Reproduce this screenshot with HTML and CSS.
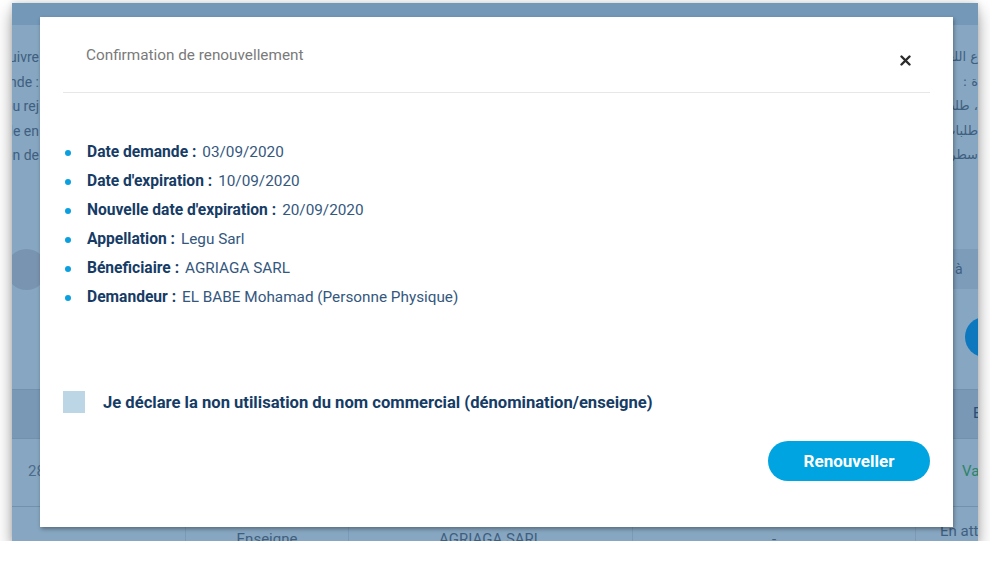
FILE: index.html
```html
<!DOCTYPE html>
<html lang="fr">
<head>
<meta charset="utf-8">
<title>Confirmation de renouvellement</title>
<link rel="stylesheet" href="styles.css">
</head>
<body>
<div class="window">
  <div class="page">
    <div class="page-top"></div>
    <div class="page-intro">
      <div class="intro-left">
        <div class="line"><span>Vous pouvez suivre</span></div>
        <div class="line"><span>Statut de la demande :</span></div>
        <div class="line"><span>Acceptation ou rej</span></div>
        <div class="line"><span>Demande en</span></div>
        <div class="line"><span>Validation de</span></div>
      </div>
      <div class="intro-right" dir="rtl">
        <div class="line">ع اللغة</div>
        <div class="line">ة :</div>
        <div class="line">، طلب</div>
        <div class="line">طلبات</div>
        <div class="line">سطر</div>
      </div>
    </div>
    <div class="page-band">
      <div class="band-circle"></div>
      <div class="band-right">à</div>
    </div>
    <div class="page-actions">
      <div class="action-circle"></div>
    </div>
    <div class="page-table">
      <div class="trow thead">
        <div class="cell"></div><div class="cell"></div><div class="cell"></div><div class="cell"></div>
        <div class="cell last">Etat</div>
      </div>
      <div class="trow tbody">
        <div class="cell first">28/08/2020</div><div class="cell"></div><div class="cell"></div><div class="cell"></div>
        <div class="cell last ok">Valide</div>
      </div>
      <div class="trow tlast">
        <div class="cell"></div>
        <div class="cell center">Enseigne</div>
        <div class="cell center">AGRIAGA SARL</div>
        <div class="cell center">-</div>
        <div class="cell wait">En attente</div>
      </div>
    </div>
  </div>

  <div class="modal" role="dialog" aria-labelledby="modal-title">
    <div class="modal-header">
      <h2 id="modal-title" class="modal-title">Confirmation de renouvellement</h2>
      <button class="modal-close" aria-label="Fermer">
        <svg width="11" height="11" viewBox="0 0 11 11"><path d="M1.5 1.5 L9.5 9.5 M9.5 1.5 L1.5 9.5" stroke="#2b2b2b" stroke-width="2.4" stroke-linecap="round"/></svg>
      </button>
    </div>
    <div class="modal-body">
      <ul class="details">
        <li><b>Date demande :</b> <span>03/09/2020</span></li>
        <li><b>Date d'expiration :</b> <span>10/09/2020</span></li>
        <li><b>Nouvelle date d'expiration :</b> <span>20/09/2020</span></li>
        <li><b>Appellation :</b> <span>Legu Sarl</span></li>
        <li><b>Béneficiaire :</b> <span>AGRIAGA SARL</span></li>
        <li><b>Demandeur :</b> <span>EL BABE Mohamad (Personne Physique)</span></li>
      </ul>
      <label class="declare">
        <span class="check"></span>
        <span class="declare-text">Je déclare la non utilisation du nom commercial (dénomination/enseigne)</span>
      </label>
      <div class="actions">
        <button class="btn-primary">Renouveller</button>
      </div>
    </div>
  </div>
</div>
</body>
</html>
```

FILE: styles.css
```css
* { box-sizing: border-box; }

html, body {
  margin: 0;
  padding: 0;
  background: #ffffff;
}

body {
  padding: 3px 0 0 12px;
  font-family: Roboto, "Liberation Sans", sans-serif;
}

.window {
  position: relative;
  width: 966px;
  height: 538px;
  overflow: hidden;
  background: #87a6c1;
  box-shadow: 0 8px 16px rgba(0, 0, 0, 0.36), 0 0 6px rgba(0, 0, 0, 0.14);
}

/* ---------- dimmed page behind the dialog ---------- */
.page {
  display: flex;
  flex-direction: column;
  height: 100%;
  color: #3f5f80;
  font-size: 14px;
}

.page-top {
  height: 22px;
  background: #7398b8;
  flex: none;
}

.page-intro {
  height: 224px;
  flex: none;
  display: flex;
  justify-content: space-between;
  padding-top: 20px;
}

.intro-left {
  width: 27px;
  overflow: hidden;
}

.intro-right {
  width: 25px;
  overflow: hidden;
  font-family: "DejaVu Sans", sans-serif;
  font-size: 13px;
}

.line {
  height: 24.5px;
  line-height: 24.5px;
  display: flex;
  white-space: nowrap;
}

.intro-left .line {
  justify-content: flex-end;
}

.intro-left .line span { flex: none; }

.page-band {
  height: 40px;
  flex: none;
  display: flex;
  justify-content: space-between;
}

.band-circle {
  width: 41px;
  height: 41px;
  border-radius: 50%;
  background: #7994b0;
  margin-left: -6px;
}

.band-right {
  width: 40px;
  background: #7c9cba;
  padding-left: 17px;
  line-height: 40px;
  color: #3f5f80;
}

.page-actions {
  height: 100px;
  flex: none;
  display: flex;
  justify-content: flex-end;
  padding-top: 28px;
}

.action-circle {
  width: 40px;
  height: 40px;
  border-radius: 50%;
  background: #0d78bd;
  margin-right: -27px;
}

.page-table {
  flex: 1;
  display: flex;
  flex-direction: column;
}

.trow {
  display: grid;
  grid-template-columns: 174px 163px 284px 283px 1fr;
  border-top: 1px solid #7390ad;
  flex: none;
}

.thead {
  height: 49px;
  background: #7898b6;
}

.tbody { height: 68px; }

.tlast { flex: 1; }

.cell {
  border-right: 1px solid #7c9ab6;
  white-space: nowrap;
  overflow: hidden;
}

.cell:last-child { border-right: 0; }

.thead .last {
  color: #2b4c73;
  padding-left: 57px;
  line-height: 47px;
  font-size: 15px;
}

.tbody .first {
  padding-left: 16px;
  line-height: 64px;
  font-size: 15px;
  color: #4c6b8b;
}

.tbody .last {
  padding-left: 46px;
  line-height: 64px;
  font-size: 15px;
}

.ok { color: #2d8469; }

.center {
  text-align: center;
  padding-top: 23px;
  font-size: 15px;
  color: #3f5f80;
}

.wait {
  padding-left: 24px;
  padding-top: 15px;
  font-size: 15px;
  color: #3f5f80;
}

/* ---------- dialog ---------- */
.modal {
  position: absolute;
  left: 28px;
  top: 14px;
  width: 913px;
  height: 510px;
  background: #ffffff;
  box-shadow: 1px 2px 4px rgba(0, 0, 0, 0.35);
  padding: 0 23px;
  display: flex;
  flex-direction: column;
}

.modal-header {
  height: 76px;
  flex: none;
  display: flex;
  justify-content: space-between;
  align-items: flex-start;
  border-bottom: 1px solid #e7e7e7;
  padding: 0 19px 0 23px;
}

.modal-title {
  margin: 28px 0 0;
  font-size: 15.3px;
  line-height: 20px;
  font-weight: 400;
  color: #7a7a7a;
}

.modal-close {
  margin-top: 38px;
  padding: 0;
  border: 0;
  background: none;
  width: 11px;
  height: 11px;
  display: flex;
}

.modal-body {
  display: flex;
  flex-direction: column;
}

.details {
  list-style: none;
  margin: 45px 0 0;
  padding: 0 0 0 2px;
  font-size: 15.3px;
}

.details li {
  height: 29px;
  line-height: 29px;
  display: flex;
  align-items: center;
  white-space: nowrap;
}

.details li::before {
  content: "";
  width: 6px;
  height: 6px;
  border-radius: 50%;
  background: #0aa0e0;
  margin-right: 16px;
  flex: none;
}

.details b {
  font-weight: 700;
  font-size: 15.6px;
  color: #163c66;
  margin-right: 6px;
}

.details span {
  color: #34577e;
}

.declare {
  margin-top: 79px;
  display: flex;
  align-items: center;
  height: 22px;
}

.check {
  width: 22px;
  height: 22px;
  background: #bcd6e6;
  flex: none;
  margin-right: 18px;
}

.declare-text {
  font-size: 16.6px;
  font-weight: 700;
  color: #163c66;
  white-space: nowrap;
}

.actions {
  margin-top: 28px;
  display: flex;
  justify-content: flex-end;
}

.btn-primary {
  width: 162px;
  height: 40px;
  border: 0;
  border-radius: 20px;
  background: #00a4e0;
  color: #ffffff;
  font-family: inherit;
  font-size: 17px;
  font-weight: 700;
}
```
